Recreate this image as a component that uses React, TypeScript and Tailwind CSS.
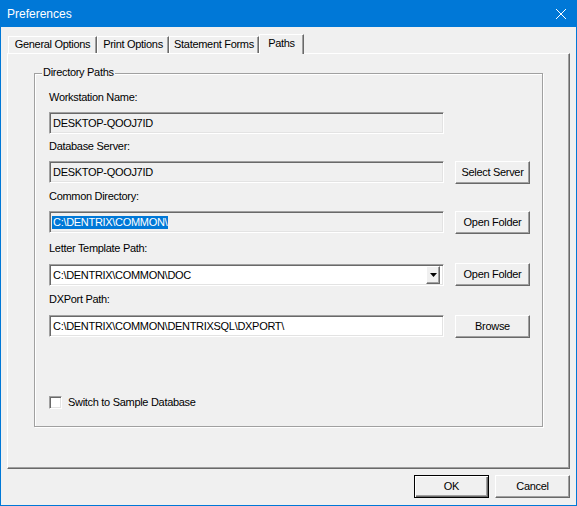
import React from 'react'

const raised =
  'border border-t-white border-l-white border-r-[#696969] border-b-[#696969] shadow-[inset_-1px_-1px_0_#a0a0a0] bg-[#f0f0f0]'
const sunken =
  'border border-t-[#a0a0a0] border-l-[#a0a0a0] border-r-white border-b-white shadow-[inset_1px_1px_0_#696969,inset_-1px_-1px_0_#e3e3e3]'

function Btn({ label, isDefault = false }: { label: string; isDefault?: boolean }) {
  return (
    <div
      className={`w-[75px] h-[23px] flex items-center justify-center leading-[13px] ${
        isDefault
          ? 'border border-[#000] bg-[#f0f0f0] shadow-[inset_1px_1px_0_#fff,inset_-1px_-1px_0_#696969,inset_-2px_-2px_0_#a0a0a0]'
          : raised
      }`}
    >
      {label}
    </div>
  )
}

function Label({ text, mt }: { text: string; mt: string }) {
  return <div className={`h-[13px] leading-[13px] ${mt}`}>{text}</div>
}

function Tab({ label, w, selected = false }: { label: string; w: string; selected?: boolean }) {
  return (
    <div
      className={`${w} flex justify-center border-t border-l border-t-white border-l-white border-r border-r-[#696969] shadow-[inset_-1px_0_0_#a0a0a0] bg-[#f0f0f0] ${
        selected ? 'h-[20px] -mb-[1px] relative z-10 pt-[2px]' : 'h-[17px] pt-[1px]'
      }`}
    >
      <span className="leading-[13px]">{label}</span>
    </div>
  )
}

export default function App() {
  return (
    <div className="w-[577px] h-[506px] flex flex-col bg-[#f0f0f0] border-l border-r border-b border-[#0078d7] text-[11px] tracking-[-0.3px] text-black font-['Liberation_Sans',Arial,sans-serif] select-none">
      {/* title bar */}
      <div className="h-[27px] shrink-0 bg-[#0078d7] flex items-center justify-between pl-[6px] pr-[10px]">
        <span className="text-white text-[12px] tracking-normal">Preferences</span>
        <svg width="10" height="10" viewBox="0 0 10 10">
          <path d="M0 0 L10 10 M10 0 L0 10" stroke="#fff" strokeWidth="1" />
        </svg>
      </div>

      <div className="flex-1 flex flex-col px-[6px] pt-[7px]">
        {/* tabs */}
        <div className="flex items-end h-[19px] pl-[1px]">
          <Tab label="General Options" w="w-[89px]" />
          <Tab label="Print Options" w="w-[72px]" />
          <Tab label="Statement Forms" w="w-[90px]" />
          <Tab label="Paths" w="w-[45px]" selected />
        </div>

        {/* tab panel */}
        <div className="h-[416px] border border-t-white border-l-white border-r-[#696969] border-b-[#696969] shadow-[inset_-1px_-1px_0_#a0a0a0] pt-[19px] pl-[26px]">
          <div className="relative w-[509px] h-[354px] border border-[#a0a0a0] shadow-[1px_1px_0_#fff,inset_1px_1px_0_#fff] pl-[14px] pt-[17px]">
            <span className="absolute left-[7px] -top-[8px] px-[1px] leading-[13px] bg-[#f0f0f0]">
              Directory Paths
            </span>

            <Label text="Workstation Name:" mt="" />
            <div className={`mt-[8px] w-[395px] h-[22px] ${sunken} pl-[3px] flex items-center`}>
              DESKTOP-QOOJ7ID
            </div>

            <Label text="Database Server:" mt="mt-[6px]" />
            <div className="mt-[8px] flex items-start">
              <div className={`w-[395px] h-[22px] ${sunken} pl-[3px] flex items-center`}>
                DESKTOP-QOOJ7ID
              </div>
              <div className="ml-[11px]">
                <Btn label="Select Server" />
              </div>
            </div>

            <Label text="Common Directory:" mt="mt-[6px]" />
            <div className="mt-[8px] flex items-start">
              <div className={`w-[395px] h-[22px] ${sunken} pl-[2px] flex items-center`}>
                <span className="bg-[#0078d7] text-white pl-[1px] pr-[1px] leading-[13px]">
                  {'C:\\DENTRIX\\COMMON\\'}
                </span>
              </div>
              <div className="ml-[11px]">
                <Btn label="Open Folder" />
              </div>
            </div>

            <Label text="Letter Template Path:" mt="mt-[8px]" />
            <div className="mt-[8px] flex items-end">
              <div className={`w-[395px] h-[22px] ${sunken} bg-white pl-[3px] flex items-center`}>
                <span className="flex-1">{'C:\\DENTRIX\\COMMON\\DOC'}</span>
                <div className={`w-[14px] h-[18px] mr-[3px] flex items-center justify-center ${raised}`}>
                  <svg width="7" height="4" viewBox="0 0 7 4">
                    <path d="M0 0 H7 L3.5 4 Z" fill="#000" />
                  </svg>
                </div>
              </div>
              <div className="ml-[11px]">
                <Btn label="Open Folder" />
              </div>
            </div>

            <Label text="DXPort Path:" mt="mt-[7px]" />
            <div className="mt-[9px] flex items-start">
              <div className={`w-[395px] h-[22px] ${sunken} bg-white pl-[3px] flex items-center`}>
                {'C:\\DENTRIX\\COMMON\\DENTRIXSQL\\DXPORT\\'}
              </div>
              <div className="ml-[11px]">
                <Btn label="Browse" />
              </div>
            </div>

            <div className="mt-[58px] flex items-center">
              <div className={`w-[13px] h-[13px] bg-white ${sunken}`} />
              <span className="ml-[6px] leading-[13px]">Switch to Sample Database</span>
            </div>
          </div>
        </div>

        {/* dialog buttons */}
        <div className="mt-[6px] flex justify-end gap-[6px]">
          <Btn label="OK" isDefault />
          <Btn label="Cancel" />
        </div>
      </div>
    </div>
  )
}
